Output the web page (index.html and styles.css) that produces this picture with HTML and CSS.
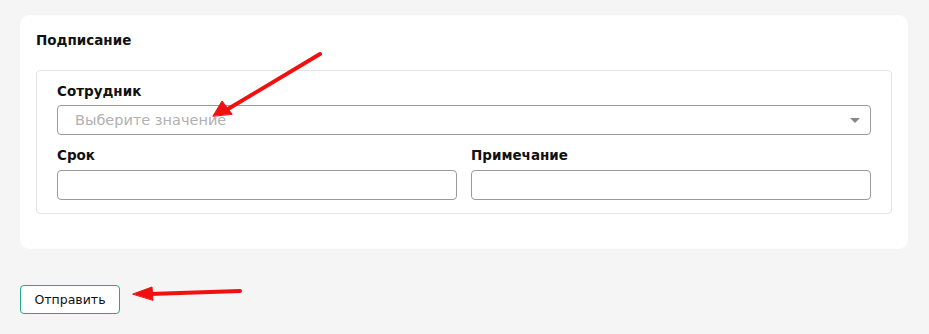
FILE: index.html
```html
<!DOCTYPE html>
<html lang="ru">
<head>
    <meta charset="UTF-8">
    <meta name="viewport" content="width=device-width, initial-scale=1.0">
    <title>Подписание</title>
    <link rel="stylesheet" href="styles.css">
</head>
<body>
    <div class="card">
        <h2 class="card-title">Подписание</h2>
        <div class="group">
            <label class="field-label" for="employee">Сотрудник</label>
            <div class="select">
                <span class="placeholder">Выберите значение</span>
                <span class="caret"></span>
            </div>
            <div class="row">
                <div class="col">
                    <label class="field-label" for="term">Срок</label>
                    <input type="text" id="term" class="input">
                </div>
                <div class="col">
                    <label class="field-label" for="note">Примечание</label>
                    <input type="text" id="note" class="input">
                </div>
            </div>
        </div>
    </div>

    <button type="button" class="submit-button">Отправить</button>

    <!-- стрелки-пометки поверх скриншота -->
    <svg class="marks" viewBox="0 0 929 334" width="929" height="334">
        <g fill="#f01010" stroke="#f01010" stroke-linecap="round">
            <line x1="320" y1="54" x2="228" y2="109" stroke-width="4"/>
            <polygon points="213,116 222,101 232,114" stroke-width="1"/>
            <line x1="240" y1="291" x2="150" y2="294" stroke-width="4"/>
            <polygon points="133,294 152,287 153,300" stroke-width="1"/>
        </g>
    </svg>
</body>
</html>
```

FILE: styles.css
```css
body {
    margin: 0;
    padding: 15px 21px 0 20px;
    background-color: #f5f5f5;
    font-family: "DejaVu Sans", Verdana, sans-serif;
    color: #111;
}
.card {
    background: #fff;
    border-radius: 10px;
    padding: 14px 16px 35px;
}
.card-title {
    margin: 0 0 19px;
    font-size: 13.5px;
    font-weight: 700;
    line-height: 22px;
}
.group {
    border: 1px solid #e3e3e8;
    border-radius: 4px;
    padding: 11px 20px 13px;
}
.field-label {
    display: block;
    font-size: 13.5px;
    font-weight: 700;
    line-height: 18px;
    margin-bottom: 5px;
}
.select {
    height: 30px;
    box-sizing: border-box;
    border: 1px solid #9a9a9a;
    border-radius: 4px;
    display: flex;
    align-items: center;
    justify-content: space-between;
    padding: 0 10px 0 17px;
}
.placeholder {
    color: #b0b0b0;
    font-size: 14.5px;
}
.caret {
    width: 0;
    height: 0;
    border-left: 5px solid transparent;
    border-right: 5px solid transparent;
    border-top: 5px solid #888;
}
.row {
    display: flex;
    gap: 14px;
    margin-top: 11px;
}
.col {
    flex: 1;
}
.col .field-label {
    margin-bottom: 6px;
}
.input {
    display: block;
    width: 100%;
    height: 30px;
    box-sizing: border-box;
    border: 1px solid #9a9a9a;
    border-radius: 4px;
    margin: 0;
    font: inherit;
}
.submit-button {
    margin-top: 36px;
    height: 29px;
    width: 100px;
    background: #fff;
    border: 1px solid #21a88e;
    border-radius: 4px;
    font-family: inherit;
    font-size: 12.5px;
    color: #111;
    cursor: pointer;
}
.marks {
    position: absolute;
    top: 0;
    left: 0;
    pointer-events: none;
}
```
